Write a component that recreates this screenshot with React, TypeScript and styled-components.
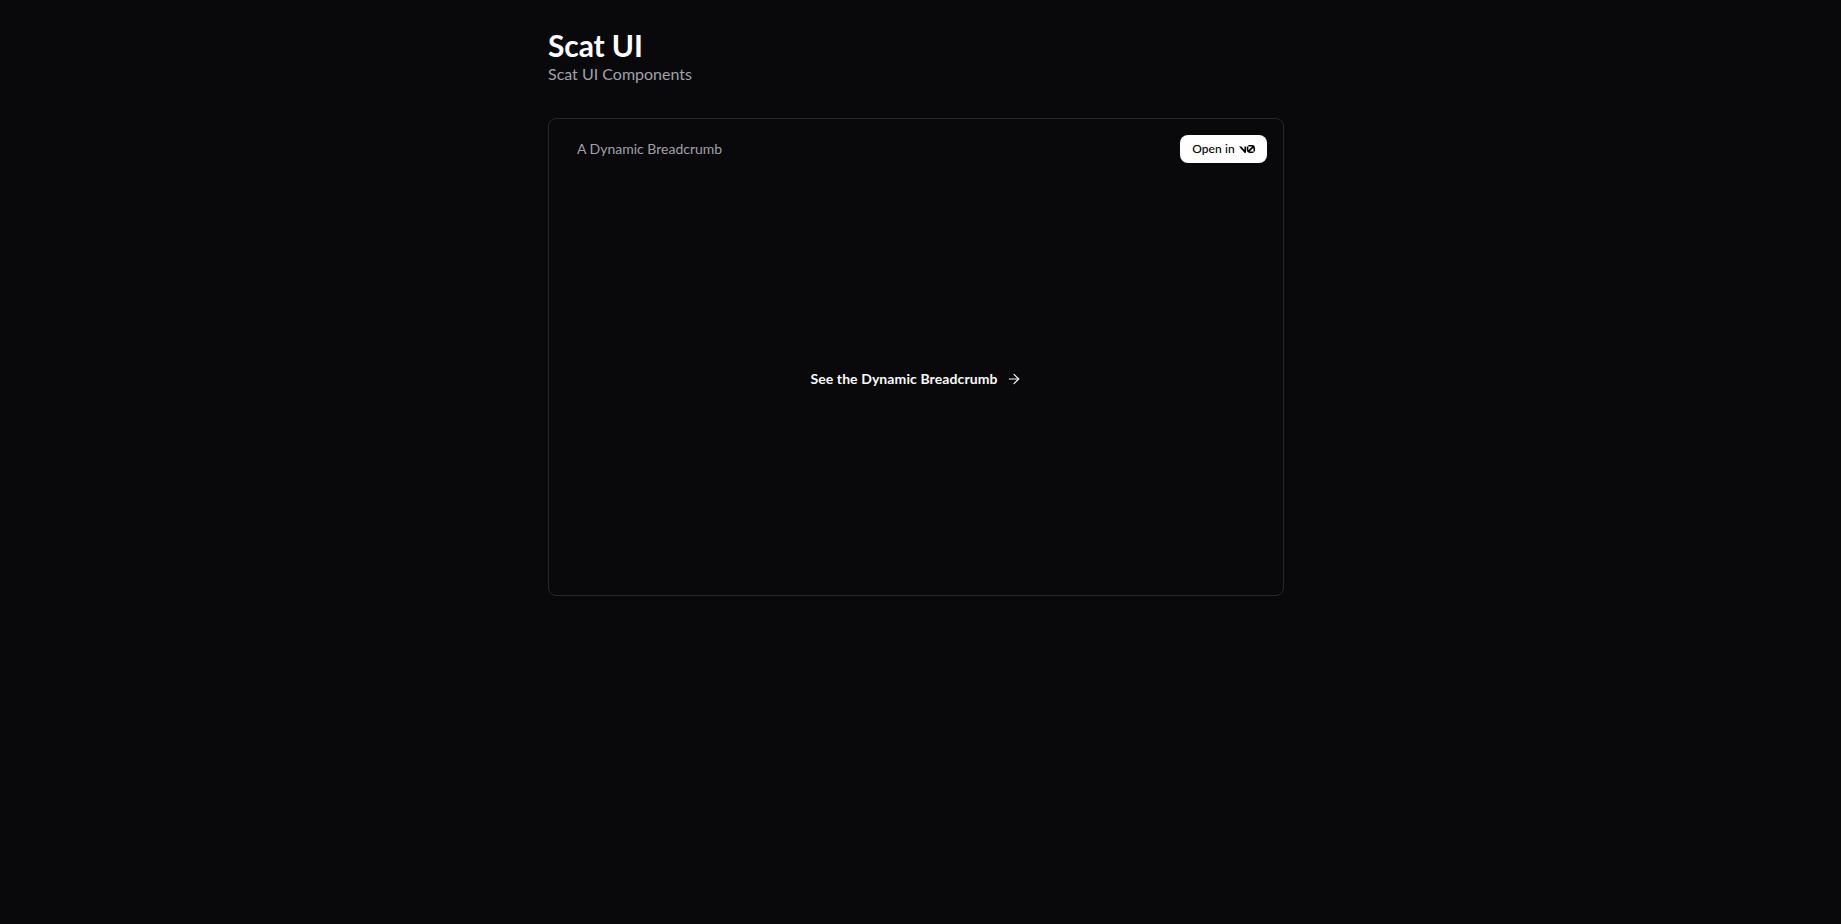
import React from "react";
import styled, { createGlobalStyle } from "styled-components";

const Global = createGlobalStyle`
  html, body { margin: 0; min-height: 100%; background: #09090b; }
  body { font-family: Lato, "Noto Sans", "Liberation Sans", sans-serif; color: #fafafa; }
`;

const Page = styled.main`
  min-height: 924px;
  box-sizing: border-box;
  display: flex;
  justify-content: center;
  padding: 27px 9px 0 0;
`;

const Column = styled.div`
  width: 736px;
  display: flex;
  flex-direction: column;
`;

const Header = styled.header`
  display: flex;
  flex-direction: column;
  margin-bottom: 33px;
`;

const Title = styled.h1`
  margin: 0;
  font-size: 30px;
  line-height: 36px;
  font-weight: 700;
  letter-spacing: -0.1px;
  color: #fff;
`;

const Subtitle = styled.p`
  margin: 0;
  font-size: 16px;
  line-height: 22px;
  color: #a1a1aa;
`;

const Card = styled.section`
  height: 478px;
  box-sizing: border-box;
  border: 1px solid #27272a;
  border-radius: 8px;
  display: flex;
  flex-direction: column;
  padding: 16px 16px 0 28px;
`;

const CardTop = styled.div`
  display: flex;
  align-items: center;
  justify-content: space-between;
`;

const CardLabel = styled.h2`
  margin: 0;
  font-size: 14px;
  line-height: 20px;
  font-weight: 400;
  color: #a1a1aa;
`;

const OpenButton = styled.button`
  display: inline-flex;
  align-items: center;
  gap: 4px;
  height: 28px;
  width: 87px;
  box-sizing: border-box;
  justify-content: center;
  padding: 0;
  border: 0;
  border-radius: 8px;
  background: #fff;
  color: #000;
  font: 500 12px/16px Lato, "Noto Sans", sans-serif;
  letter-spacing: 0.1px;
`;

const Center = styled.div`
  flex: 1;
  display: flex;
  align-items: center;
  justify-content: center;
  margin-left: -12px;
`;

const DemoLink = styled.a`
  display: inline-flex;
  align-items: center;
  gap: 8px;
  font-size: 14px;
  line-height: 20px;
  font-weight: 700;
  letter-spacing: 0.1px;
  color: #fafafa;
`;

const V0Logo = () => (
  <svg width="16" height="8" viewBox="0 0 40 20" fill="currentColor" aria-hidden="true">
    <path d="M23.3919 0H32.9188C36.7819 0 39.9136 3.13165 39.9136 6.99475V16.0805H36.0006V6.99475C36.0006 6.90167 35.9969 6.80925 35.9898 6.71766L26.4628 16.0805C26.4949 16.0805 26.5272 16.0805 26.5595 16.0805H36.0006V19.7762H26.5595C22.6964 19.7762 19.4788 16.6139 19.4788 12.7508V3.68923H23.3919V12.7508C23.3919 12.9253 23.4054 13.0977 23.4316 13.2668L33.1682 3.6995C33.0861 3.6927 33.003 3.68923 32.9188 3.68923H23.3919V0Z" />
    <path d="M13.7688 19.0956L0 3.68759H5.53933L13.6231 12.7337V3.68759H17.7535V17.5746C17.7535 19.6705 15.1654 20.6584 13.7688 19.0956Z" />
  </svg>
);

const Arrow = () => (
  <svg width="16" height="16" viewBox="0 0 24 24" fill="none" stroke="currentColor" strokeWidth="1.75" strokeLinecap="round" strokeLinejoin="round" aria-hidden="true">
    <path d="M5 12h14" />
    <path d="m12 5 7 7-7 7" />
  </svg>
);

export default function App() {
  return (
    <>
      <Global />
      <Page>
        <Column>
          <Header>
            <Title>Scat UI</Title>
            <Subtitle>Scat UI Components</Subtitle>
          </Header>
          <Card>
            <CardTop>
              <CardLabel>A Dynamic Breadcrumb</CardLabel>
              <OpenButton>
                Open in <V0Logo />
              </OpenButton>
            </CardTop>
            <Center>
              <DemoLink>
                See the Dynamic Breadcrumb <Arrow />
              </DemoLink>
            </Center>
          </Card>
        </Column>
      </Page>
    </>
  );
}
